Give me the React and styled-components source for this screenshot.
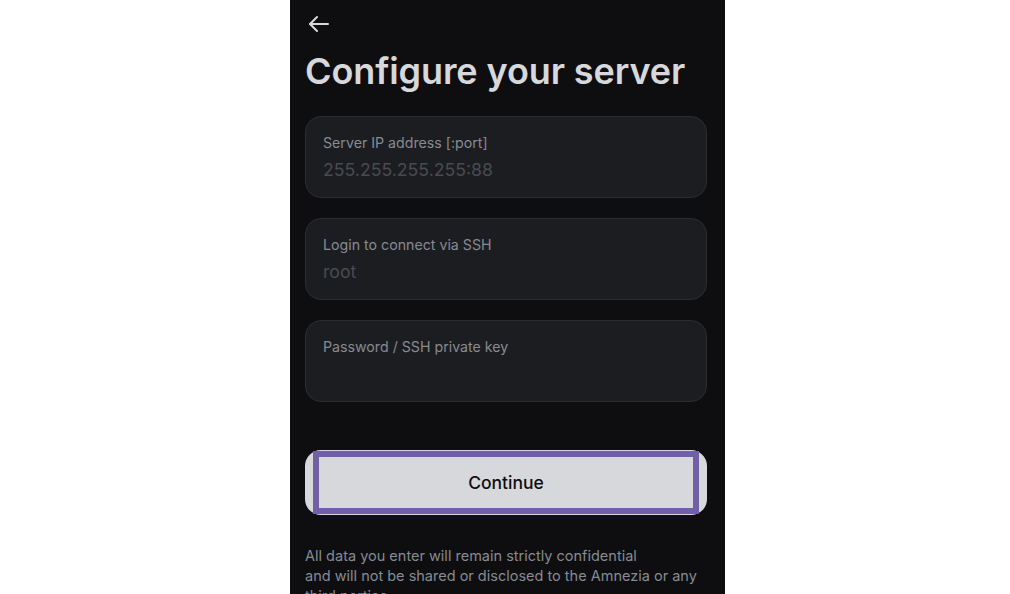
import React from "react";
import styled, { createGlobalStyle } from "styled-components";

const Global = createGlobalStyle`
  html, body { margin: 0; padding: 0; background: #ffffff; }
  body { font-family: Inter, "Noto Sans", sans-serif; }
`;

const Page = styled.div`
  width: 1010px;
  height: 594px;
  overflow: hidden;
  display: flex;
`;

const Panel = styled.div`
  margin-left: 290px;
  width: 435px;
  height: 594px;
  background: #0e0e11;
  box-sizing: border-box;
  padding: 11px 18px 0 15px;
  display: flex;
  flex-direction: column;
  overflow: hidden;
  & > * { flex-shrink: 0; }
`;

const BackButton = styled.button`
  width: 26px;
  height: 26px;
  padding: 0;
  margin-left: 1px;
  border: none;
  background: transparent;
  color: #d7d8db;
  display: flex;
  align-items: center;
  justify-content: center;
`;

const Title = styled.h1`
  margin: 10px 0 0 0;
  font-family: Inter, "Noto Sans", sans-serif;
  font-weight: 600;
  font-size: 36px;
  line-height: 48px;
  letter-spacing: -0.1px;
  color: #d7d8db;
`;

const Fields = styled.div`
  margin-top: 21px;
  display: flex;
  flex-direction: column;
  gap: 20px;
`;

const Field = styled.div`
  height: 82px;
  box-sizing: border-box;
  border: 1px solid #2c2d30;
  border-radius: 16px;
  background: #1c1d21;
  padding: 16px 17px 0 17px;
  display: flex;
  flex-direction: column;
`;

const Label = styled.div`
  font-size: 14.2px;
  line-height: 20px;
  color: #878b91;
`;

const Value = styled.div`
  margin-top: 5px;
  font-size: 17.7px;
  line-height: 24px;
  color: #494b50;
`;

const Continue = styled.button`
  position: relative;
  margin-top: 48px;
  height: 65px;
  border: none;
  border-radius: 16px;
  background: #d7d8db;
  color: #0e0e11;
  font-family: Inter, "Noto Sans", sans-serif;
  font-size: 17.5px;
  font-weight: 500;
  padding: 0;
  &::after {
    content: "";
    position: absolute;
    left: 8px;
    right: 8px;
    top: 1px;
    bottom: 1px;
    border: 6px solid #7160a8;
  }
`;

const Note = styled.p`
  margin: 31px 0 0 0;
  font-size: 14.5px;
  line-height: 20px;
  color: #878b91;
`;

function ArrowLeft() {
  return (
    <svg width="22" height="18" viewBox="0 0 22 18" fill="none" stroke="currentColor" strokeWidth="2" strokeLinecap="round" strokeLinejoin="round">
      <path d="M20 9H2" />
      <path d="M9 2L2 9l7 7" />
    </svg>
  );
}

export default function App() {
  return (
    <Page>
      <Global />
      <Panel>
        <BackButton aria-label="Back">
          <ArrowLeft />
        </BackButton>
        <Title>Configure your server</Title>
        <Fields>
          <Field>
            <Label>Server IP address [:port]</Label>
            <Value>255.255.255.255:88</Value>
          </Field>
          <Field>
            <Label>Login to connect via SSH</Label>
            <Value>root</Value>
          </Field>
          <Field>
            <Label>Password / SSH private key</Label>
          </Field>
        </Fields>
        <Continue>Continue</Continue>
        <Note>
          All data you enter will remain strictly confidential
          <br />
          and will not be shared or disclosed to the Amnezia or any third parties
        </Note>
      </Panel>
    </Page>
  );
}
